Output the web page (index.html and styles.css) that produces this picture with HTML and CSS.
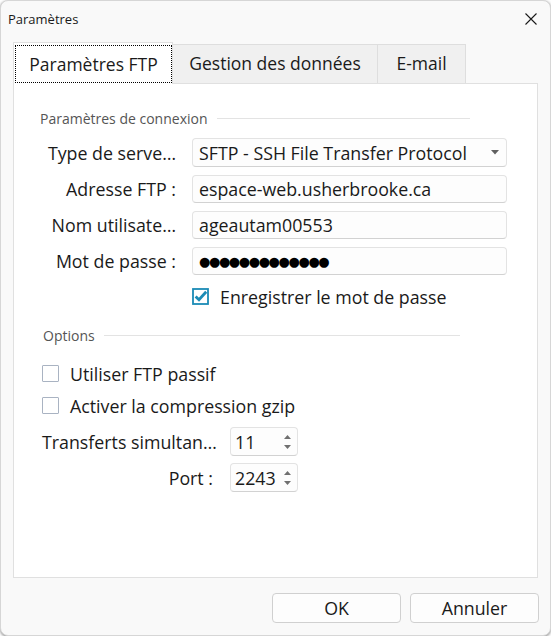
FILE: index.html
```html
<!DOCTYPE html>
<html lang="fr">
<head>
    <meta charset="UTF-8">
    <meta name="viewport" content="width=device-width, initial-scale=1.0">
    <title>Paramètres</title>
    <link rel="stylesheet" href="styles.css">
</head>
<body>

<div class="window">
    <div class="titlebar">
        <span class="title">Paramètres</span>
        <span class="close">
            <svg width="12" height="12" viewBox="0 0 12 12"><path d="M0.5 0.5 L11.5 11.5 M11.5 0.5 L0.5 11.5" stroke="#1a1a1a" stroke-width="1.1" fill="none"/></svg>
        </span>
    </div>

    <div class="tabs">
        <div class="tab active"><span class="focus">Paramètres FTP</span></div>
        <div class="tab tab-data">Gestion des données</div>
        <div class="tab tab-mail">E-mail</div>
    </div>

    <div class="panel">
        <div class="group connexion">
            <div class="group-title"><span>Paramètres de connexion</span><i class="rule"></i></div>
            <div class="form">
                <label>Type de serve…</label>
                <div class="field combo">
                    <span>SFTP - SSH File Transfer Protocol</span>
                    <svg width="8" height="5" viewBox="0 0 8 5"><polygon points="0,0 8,0 4,4.5" fill="#606060"/></svg>
                </div>
                <label>Adresse FTP :</label>
                <div class="field">espace-web.usherbrooke.ca</div>
                <label>Nom utilisate…</label>
                <div class="field">ageautam00553</div>
                <label>Mot de passe :</label>
                <div class="field"><span class="dots">●●●●●●●●●●●●●</span></div>
            </div>
            <div class="check-row save-pass">
                <svg class="box" width="17" height="17" viewBox="0 0 17 17">
                    <rect x="1" y="1" width="15" height="15" fill="#fff" stroke="#1b8bb6" stroke-width="1.8"/>
                    <path d="M3.6 8.4 L7 11.8 L14.2 3.8" stroke="#1b8bb6" stroke-width="2.8" fill="none"/>
                </svg>
                <span>Enregistrer le mot de passe</span>
            </div>
        </div>

        <div class="group options">
            <div class="group-title"><span>Options</span><i class="rule"></i></div>
            <div class="check-row">
                <span class="box empty"></span>
                <span>Utiliser FTP passif</span>
            </div>
            <div class="check-row">
                <span class="box empty"></span>
                <span>Activer la compression gzip</span>
            </div>
            <div class="spin-form">
                <label>Transferts simultan…</label>
                <div class="field spin">
                    <span>11</span>
                    <svg width="7" height="14" viewBox="0 0 7 14"><polygon points="0,4 7,4 3.5,0" fill="#707070"/><polygon points="0,10 7,10 3.5,14" fill="#707070"/></svg>
                </div>
                <label>Port :</label>
                <div class="field spin">
                    <span>2243</span>
                    <svg width="7" height="14" viewBox="0 0 7 14"><polygon points="0,4 7,4 3.5,0" fill="#707070"/><polygon points="0,10 7,10 3.5,14" fill="#707070"/></svg>
                </div>
            </div>
        </div>
    </div>

    <div class="buttons">
        <button>OK</button>
        <button>Annuler</button>
    </div>
</div>

</body>
</html>
```

FILE: styles.css
```css
* { box-sizing: border-box; }
body { margin: 0; background: #ffffff; font-family: "Open Sans", "Noto Sans", sans-serif; color: #1a1a1a; font-size: 17.8px; }

.window {
    width: 551px;
    height: 636px;
    background: #f9f9f9;
    border: 1px solid #d6d6d6;
    border-radius: 8px;
    box-shadow: 0 1px 3px rgba(0, 0, 0, 0.45);
    display: flex;
    flex-direction: column;
    overflow: hidden;
}

/* title bar */
.titlebar { height: 41px; display: flex; align-items: flex-start; padding-top: 8px; padding-left: 7px; }
.title { font-size: 13px; line-height: 20px; }
.close { margin-left: auto; margin-right: 13px; margin-top: 4px; display: flex; }

/* tabs */
.tabs { height: 41px; display: flex; align-items: flex-end; padding-left: 12px; font-size: 17.5px; }
.tab {
    height: 39px;
    display: flex;
    align-items: center;
    justify-content: center;
    background: #f0f0f0;
    border: 1px solid #dedede;
    border-bottom: none;
    line-height: 22px;
    padding-bottom: 2px;
}
.tab.active {
    width: 160px;
    height: 42px;
    margin-bottom: -1px;
    background: #ffffff;
    border-color: #e0e0e0;
    position: relative;
    z-index: 1;
    padding: 2px 0 1px 1px;
    align-items: stretch;
}
.tab.active .focus {
    flex: 1;
    display: flex;
    align-items: center;
    justify-content: center;
    border: 1px dotted #000;
    padding-bottom: 1px;
}
.tab-data { width: 206px; margin-left: -1px; }
.tab-mail { width: 89px; margin-left: -1px; }

/* panel */
.panel { height: 495px; margin: 0 12px; background: #ffffff; border: 1px solid #e0e0e0; }

.group-title { display: flex; align-items: center; gap: 9px; height: 20px; font-size: 14px; color: #555; }
.group-title .rule { flex: 1; height: 1px; background: #e3e3e3; }

.connexion { padding: 24px 0 0 26px; }
.connexion .group-title { width: 430px; }

.form {
    margin-top: 10px;
    display: grid;
    grid-template-columns: 136px 315px;
    column-gap: 16px;
    row-gap: 8px;
    align-items: center;
}
.form label, .spin-form label { text-align: right; white-space: nowrap; }

.field {
    height: 28px;
    display: flex;
    align-items: center;
    padding: 0 6px;
    background: #fdfdfd;
    border: 1px solid #e3e3e3;
    border-bottom-color: #d2d2d2;
    border-radius: 4px;
    white-space: nowrap;
}
.combo { height: 29px; justify-content: space-between; padding-right: 7px; }
.dots { font-family: "DejaVu Sans", sans-serif; font-size: 13px; letter-spacing: -1.4px; color: #000; }

.check-row { display: flex; align-items: center; gap: 11px; height: 17px; }
.save-pass { margin-top: 13px; margin-left: 152px; }
.box { width: 17px; height: 17px; flex: none; }
.box.empty { background: #fff; border: 1px solid #a9b3c2; border-radius: 1px; }

.options { padding: 20px 0 0 28px; }
.options .group-title { width: 417px; margin-left: 1px; }
.options .group-title + .check-row { margin-top: 20px; }
.options .check-row + .check-row { margin-top: 15px; }

.spin-form {
    margin-top: 13px;
    display: grid;
    grid-template-columns: 171px 68px;
    column-gap: 17px;
    row-gap: 7px;
    align-items: center;
}
.spin { height: 29px; justify-content: space-between; padding: 0 6px 0 4px; }

/* buttons */
.buttons { flex: 1; display: flex; justify-content: flex-end; align-items: flex-start; gap: 9px; padding: 15px 11px 0 0; }
.buttons button {
    width: 129px;
    height: 30px;
    font-family: inherit;
    font-size: 17.8px;
    color: #1a1a1a;
    background: #fdfdfd;
    border: 1px solid #d0d0d0;
    border-radius: 4px;
}
```
